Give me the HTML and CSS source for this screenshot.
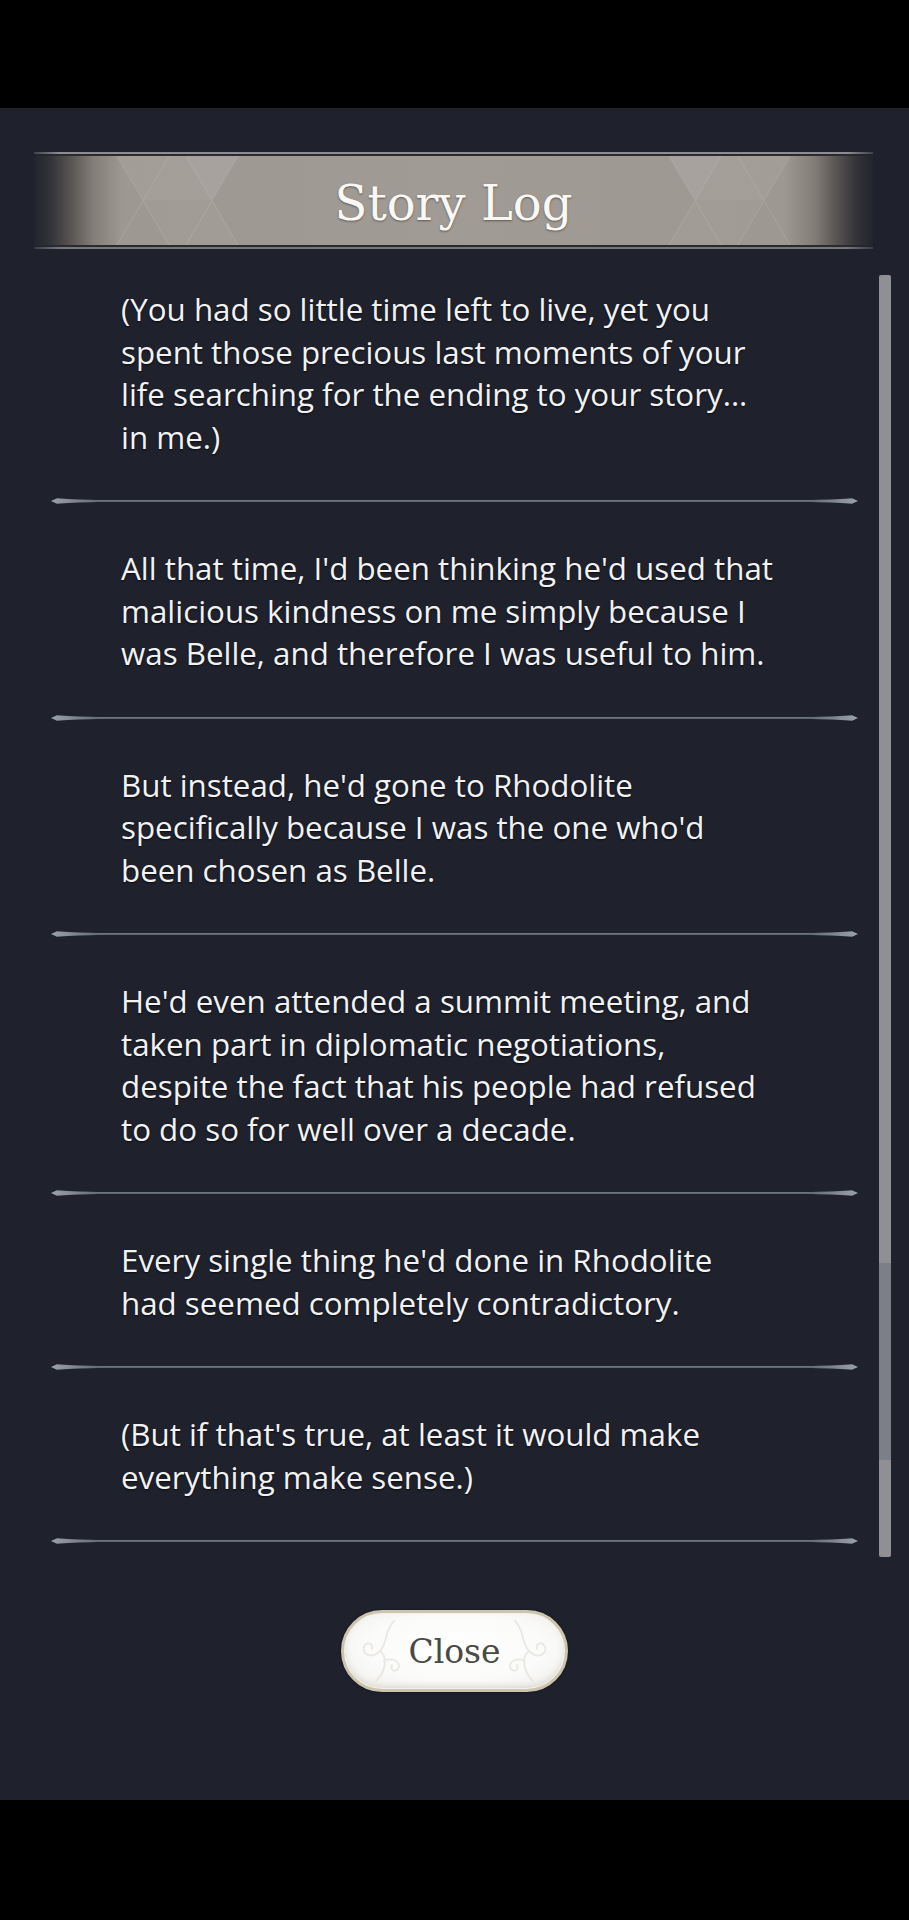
FILE: index.html
```html
<!DOCTYPE html>
<html lang="en">
<head>
<meta charset="utf-8">
<title>Story Log</title>
<link rel="stylesheet" href="styles.css">
</head>
<body>
<div class="screen">
  <div class="statusbar"></div>
  <main class="panel">
    <header class="banner">
      <div class="banner-line banner-line-top"></div>
      <div class="banner-body">
        <svg class="banner-pattern" width="839" height="89" viewBox="0 0 839 89" aria-hidden="true">
          <g fill="#ffffff">
            <polygon points="83,0 135,0 109,44" opacity="0.05"/>
            <polygon points="109,44 178,44 204,89 135,89" opacity="0.03"/>
            <polygon points="135,0 204,0 178,44 109,44" opacity="0.06"/>
            <polygon points="152,0 204,0 178,44" opacity="0.04"/>
            <polygon points="756,0 704,0 730,44" opacity="0.05"/>
            <polygon points="730,44 661,44 635,89 704,89" opacity="0.03"/>
            <polygon points="704,0 635,0 661,44 730,44" opacity="0.06"/>
            <polygon points="687,0 635,0 661,44" opacity="0.04"/>
          </g>
          <g stroke="#ffffff" stroke-width="1.5" fill="none" opacity="0.07">
            <path d="M83 0 L135 89 M135 0 L83 89 M152 0 L204 89 M204 0 L152 89"/>
            <path d="M756 0 L704 89 M704 0 L756 89 M687 0 L635 89 M635 0 L687 89"/>
          </g>
        </svg>
        <h1 class="title">Story Log</h1>
      </div>
      <div class="banner-line banner-line-bottom"></div>
    </header>

    <section class="log">
      <div class="entries">
        <article class="entry">
          <p>(You had so little time left to live, yet you<br>spent those precious last moments of your<br>life searching for the ending to your story...<br>in me.)</p>
        </article>
        <div class="sep"><svg width="807" height="8" viewBox="0 0 807 8"><use href="#sepline"/></svg></div>
        <article class="entry">
          <p>All that time, I'd been thinking he'd used that<br>malicious kindness on me simply because I<br>was Belle, and therefore I was useful to him.</p>
        </article>
        <div class="sep"><svg width="807" height="8" viewBox="0 0 807 8"><use href="#sepline"/></svg></div>
        <article class="entry">
          <p>But instead, he'd gone to Rhodolite<br>specifically because I was the one who'd<br>been chosen as Belle.</p>
        </article>
        <div class="sep"><svg width="807" height="8" viewBox="0 0 807 8"><use href="#sepline"/></svg></div>
        <article class="entry">
          <p>He'd even attended a summit meeting, and<br>taken part in diplomatic negotiations,<br>despite the fact that his people had refused<br>to do so for well over a decade.</p>
        </article>
        <div class="sep"><svg width="807" height="8" viewBox="0 0 807 8"><use href="#sepline"/></svg></div>
        <article class="entry">
          <p>Every single thing he'd done in Rhodolite<br>had seemed completely contradictory.</p>
        </article>
        <div class="sep"><svg width="807" height="8" viewBox="0 0 807 8"><use href="#sepline"/></svg></div>
        <article class="entry">
          <p>(But if that's true, at least it would make<br>everything make sense.)</p>
        </article>
        <div class="sep"><svg width="807" height="8" viewBox="0 0 807 8"><use href="#sepline"/></svg></div>
      </div>
      <div class="scrollbar"><div class="thumb"></div></div>
    </section>

    <div class="actions">
      <button class="close-btn" type="button">
        <svg class="swirl swirl-left" width="60" height="70" viewBox="0 0 60 70" aria-hidden="true">
          <g fill="none" stroke="#e4e2dc" stroke-width="2" stroke-linecap="round">
            <path d="M40 4 C30 14 34 26 26 34 C18 42 8 38 10 30 C12 24 20 26 18 32"/>
            <path d="M26 34 C34 40 32 54 22 64"/>
            <path d="M30 44 C40 40 48 46 44 52 C40 56 36 52 38 48"/>
          </g>
        </svg>
        <span class="close-label">Close</span>
        <svg class="swirl swirl-right" width="60" height="70" viewBox="0 0 60 70" aria-hidden="true">
          <g fill="none" stroke="#e4e2dc" stroke-width="2" stroke-linecap="round">
            <path d="M20 4 C30 14 26 26 34 34 C42 42 52 38 50 30 C48 24 40 26 42 32"/>
            <path d="M34 34 C26 40 28 54 38 64"/>
            <path d="M30 44 C20 40 12 46 16 52 C20 56 24 52 22 48"/>
          </g>
        </svg>
      </button>
    </div>
  </main>
  <div class="navbar"></div>
</div>

<svg class="defs" width="0" height="0" aria-hidden="true">
  <defs>
    <linearGradient id="tipL" x1="0" x2="1" y1="0" y2="0">
      <stop offset="0" stop-color="#9aa1ab"/>
      <stop offset="1" stop-color="#666d79"/>
    </linearGradient>
    <linearGradient id="tipR" x1="1" x2="0" y1="0" y2="0">
      <stop offset="0" stop-color="#9aa1ab"/>
      <stop offset="1" stop-color="#666d79"/>
    </linearGradient>
    <g id="sepline">
      <rect x="10" y="3" width="787" height="2" fill="#5f6672"/>
      <rect x="10" y="3" width="787" height="1" fill="#6d7480"/>
      <path d="M0 4 L6 1.3 Q18 2.4 46 3 L46 5 Q18 5.6 6 6.7 Z" fill="url(#tipL)"/>
      <path d="M807 4 L801 1.3 Q789 2.4 761 3 L761 5 Q789 5.6 801 6.7 Z" fill="url(#tipR)"/>
    </g>
  </defs>
</svg>
</body>
</html>
```

FILE: styles.css
```css
* { box-sizing: border-box; }

html, body {
  margin: 0;
  padding: 0;
  background: #000;
}

.screen {
  width: 909px;
  height: 1920px;
  display: flex;
  flex-direction: column;
  background: #000;
}

.statusbar {
  height: 108px;
  background: #000;
}

.navbar {
  height: 120px;
  background: #000;
}

.panel {
  height: 1692px;
  background: #1f222d;
  display: flex;
  flex-direction: column;
}

/* ---------- Banner ---------- */
.banner {
  margin: 44px 36px 0 34px;
  display: flex;
  flex-direction: column;
}

.banner-line {
  height: 4px;
  -webkit-mask-image: linear-gradient(to right, rgba(0,0,0,0.3) 0%, #000 3%, #000 97%, rgba(0,0,0,0.3) 100%);
  mask-image: linear-gradient(to right, rgba(0,0,0,0.3) 0%, #000 3%, #000 97%, rgba(0,0,0,0.3) 100%);
}

.banner-line-top {
  background: linear-gradient(to bottom, #8c8c91 0 2px, #2a2a30 2px 4px);
}

.banner-line-bottom {
  background: linear-gradient(to bottom, #2a2a30 0 2px, #76767c 2px 4px);
}

.banner-body {
  position: relative;
  height: 89px;
  display: flex;
  align-items: center;
  justify-content: center;
  background: linear-gradient(to right,
    #22242d 0%,
    #333339 2%,
    #5a5653 4.5%,
    #837d77 7%,
    #9e9892 10.5%,
    #a19b95 50%,
    #9e9892 89.5%,
    #837d77 93%,
    #5a5653 95.5%,
    #333339 98%,
    #22242d 100%);
}

.banner-pattern {
  position: absolute;
  left: 0;
  top: 0;
}

.title {
  position: relative;
  margin: 0;
  font-family: "DejaVu Serif", "Liberation Serif", serif;
  font-weight: normal;
  font-size: 48px;
  line-height: 1;
  color: #faf8f4;
  text-shadow: 0 1px 2px rgba(40, 34, 30, 0.55);
  transform: translateY(2px);
}

/* ---------- Log list ---------- */
.log {
  display: flex;
  align-items: flex-start;
  padding-left: 51px;
  gap: 21px;
}

.entries {
  width: 807px;
  display: flex;
  flex-direction: column;
}

.entry {
  padding: 43px 0 40px 70px;
}

.entry:first-child {
  padding-top: 39px;
}

.entry p {
  margin: 0;
  font-family: "Open Sans", "Noto Sans", sans-serif;
  font-size: 31.3px;
  line-height: 42.5px;
  color: #f2f2f2;
  white-space: nowrap;
  text-shadow: 0 1px 2px rgba(0, 0, 0, 0.7);
}

.sep {
  height: 6px;
  display: flex;
  align-items: center;
}

.sep svg {
  display: block;
}

.defs {
  position: absolute;
  width: 0;
  height: 0;
}

.scrollbar {
  margin-top: 26px;
  width: 12px;
  height: 1282px;
  background: #8f8f94;
  border-radius: 2px;
  display: flex;
  flex-direction: column;
}

.thumb {
  margin-top: 988px;
  height: 197px;
  background: #7d7f88;
}

/* ---------- Close button ---------- */
.actions {
  display: flex;
  justify-content: center;
  margin-top: 53px;
}

.close-btn {
  position: relative;
  width: 227px;
  height: 82px;
  border-radius: 41px;
  border: 3px solid #cdc4ad;
  background: radial-gradient(ellipse at 50% 45%, #ffffff 0%, #fbfbfa 55%, #efeeea 100%);
  box-shadow: inset 0 0 0 1px #f4f1ea, inset 0 -3px 6px rgba(150, 140, 120, 0.25), 0 0 3px rgba(0, 0, 0, 0.5);
  display: flex;
  align-items: center;
  justify-content: center;
  padding: 0;
  cursor: pointer;
}

.close-label {
  font-family: "DejaVu Serif", "Liberation Serif", serif;
  font-size: 33px;
  line-height: 1;
  color: #4a4944;
}

.swirl {
  position: absolute;
  top: 4px;
  opacity: 0.7;
}

.swirl-left { left: 10px; }
.swirl-right { right: 10px; }
```
